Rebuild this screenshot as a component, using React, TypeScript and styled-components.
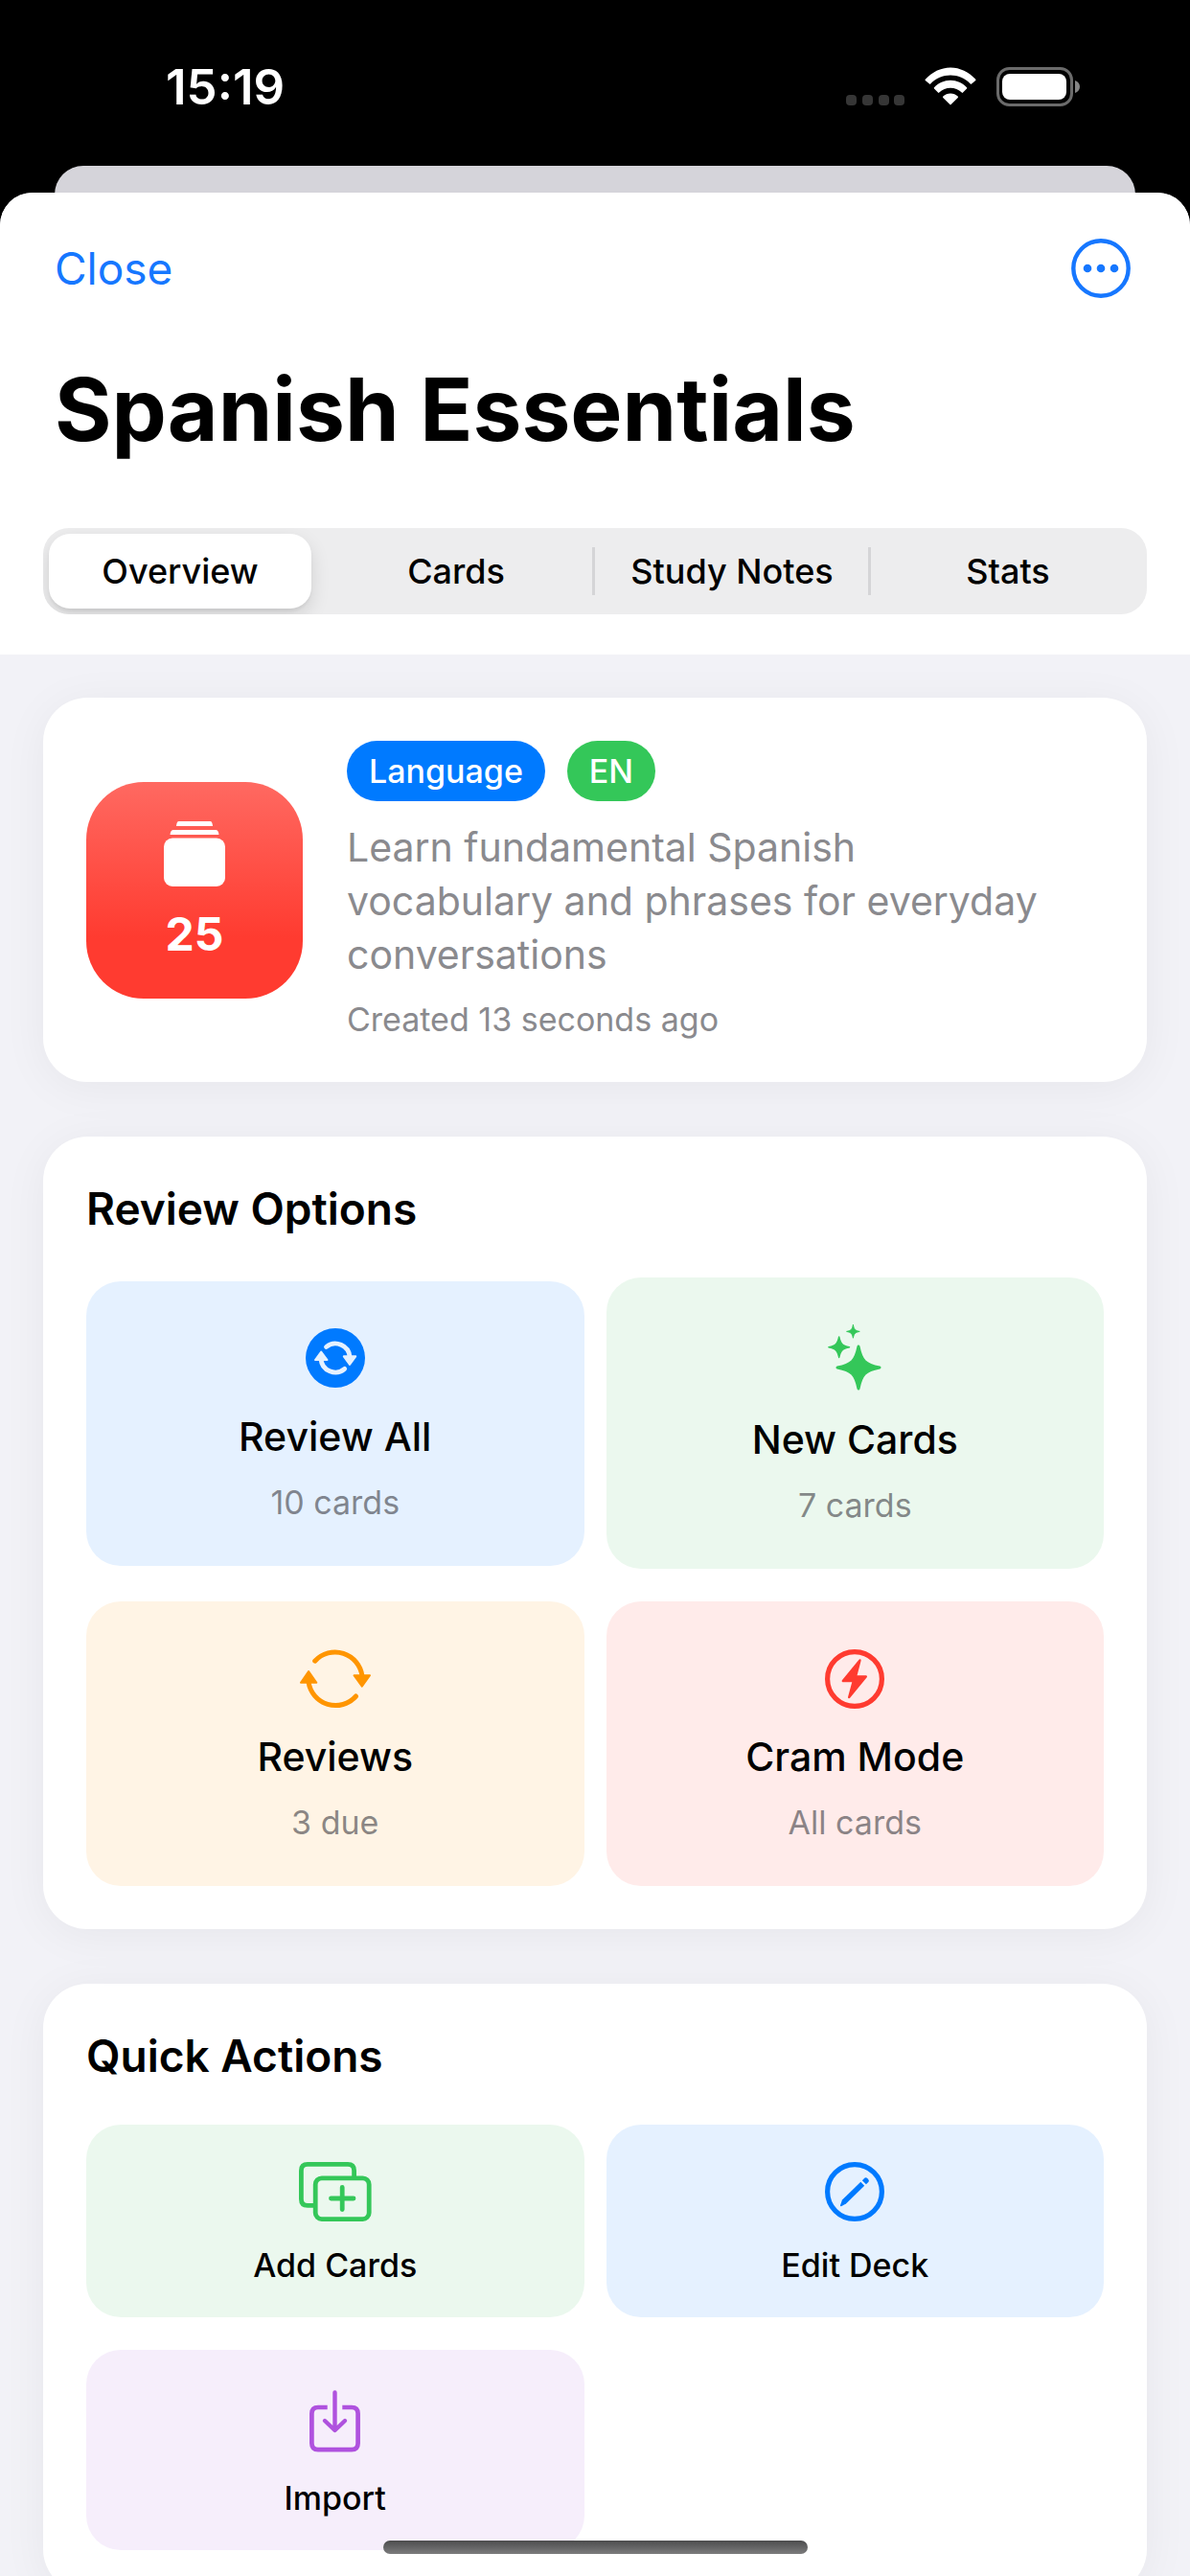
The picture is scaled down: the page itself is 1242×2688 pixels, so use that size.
import React, { useState } from "react";
import styled, { createGlobalStyle } from "styled-components";

const GlobalStyle = createGlobalStyle`
  * { box-sizing: border-box; }
  html, body { margin: 0; background: #000; }
  body {
    font-family: Inter, "Liberation Sans", sans-serif;
    color: #000;
    -webkit-font-smoothing: antialiased;
  }
  button { font: inherit; color: inherit; border: 0; background: none; padding: 0; margin: 0; cursor: pointer; }
  h1, h2, p { margin: 0; }
  svg { display: block; }
`;

const Screen = styled.div`
  position: relative;
  display: flex;
  flex-direction: column;
  height: 100vh;
  overflow: hidden;
  background: #000;
`;

const StatusBar = styled.header`
  flex: none;
  display: flex;
  align-items: center;
  justify-content: space-between;
  height: 173px;
  padding: 8px 114px 0 173px;
  color: #fff;
`;

const Clock = styled.time`
  font-size: 51px;
  line-height: 60px;
  font-weight: 600;
`;

const StatusIcons = styled.div`
  display: flex;
  align-items: center;
  gap: 21px;
`;

const BackSheet = styled.div`
  flex: none;
  height: 58px;
  margin: 0 57px -30px;
  border-radius: 30px 30px 0 0;
  background: #d5d4da;
`;

const Sheet = styled.main`
  position: relative;
  flex: 1;
  min-height: 0;
  display: flex;
  flex-direction: column;
  overflow: hidden;
  border-radius: 34px 34px 0 0;
  background: #f2f2f7;
`;

const SheetHeader = styled.div`
  flex: none;
  background: #fff;
  padding-bottom: 42px;
`;

const NavBar = styled.nav`
  display: flex;
  align-items: center;
  justify-content: space-between;
  height: 158px;
  padding: 0 62px 0 57px;
`;

const NavButton = styled.button`
  color: #1677ff;
  font-size: 46px;
  line-height: 60px;
`;

const Title = styled.h1`
  padding: 8px 57px 64px;
  font-size: 91px;
  line-height: 120px;
  font-weight: 700;
`;

const Tabs = styled.div`
  display: grid;
  grid-template-columns: repeat(4, 1fr);
  height: 90px;
  margin: 0 45px;
  border-radius: 27px;
  background: #ededee;
  overflow: hidden;
`;

const Tab = styled.button<{ $divided: boolean }>`
  display: flex;
  align-items: center;
  padding: 6px 0;
  background: ${(p) =>
    p.$divided ? "linear-gradient(#d5d5d7, #d5d5d7) right center / 3px 50px no-repeat" : "none"};
`;

const TabLabel = styled.span<{ $active: boolean }>`
  flex: 1;
  height: 78px;
  margin: 0 8px 0 6px;
  border-radius: 22px;
  font-size: 36px;
  line-height: 78px;
  font-weight: 500;
  white-space: nowrap;
  background: ${(p) => (p.$active ? "#fff" : "transparent")};
  box-shadow: ${(p) => (p.$active ? "0 8px 20px rgba(0, 0, 0, 0.12), 0 3px 3px rgba(0, 0, 0, 0.05)" : "none")};
`;

const Content = styled.div`
  flex: 1;
  min-height: 0;
  overflow: hidden;
  display: flex;
  flex-direction: column;
  gap: 57px;
  padding: 45px 45px 0;
`;

const Card = styled.section`
  flex: none;
  padding: 45px;
  border-radius: 46px;
  background: #fff;
  box-shadow: 0 6px 48px rgba(0, 0, 0, 0.05);
`;

const DeckCard = styled(Card)`
  display: flex;
  align-items: center;
  gap: 46px;
`;

const DeckBadge = styled.div`
  flex: none;
  display: flex;
  flex-direction: column;
  align-items: center;
  justify-content: center;
  gap: 20px;
  width: 226px;
  height: 226px;
  padding-top: 5px;
  border-radius: 60px;
  color: #fff;
  background: linear-gradient(#ff6961, #ff3b30 72%);
`;

const DeckCount = styled.span`
  font-size: 48px;
  line-height: 60px;
  font-weight: 700;
`;

const DeckInfo = styled.div`
  flex: 1;
  display: flex;
  flex-direction: column;
  gap: 20px;
`;

const Pills = styled.div`
  display: flex;
  gap: 23px;
`;

const Pill = styled.span<{ $color: string }>`
  padding: 0 23px;
  border-radius: 32px;
  background: ${(p) => p.$color};
  color: #fff;
  font-size: 34px;
  line-height: 63px;
  font-weight: 500;
`;

const Description = styled.p`
  max-width: 740px;
  color: #8a8a8e;
  font-size: 41px;
  line-height: 56px;
`;

const Created = styled.p`
  color: #8a8a8e;
  font-size: 34px;
  line-height: 40px;
`;

const SectionTitle = styled.h2`
  margin-bottom: 42px;
  font-size: 46px;
  line-height: 60px;
  font-weight: 600;
`;

const TileGrid = styled.div`
  display: grid;
  grid-template-columns: repeat(2, 1fr);
  align-items: center;
  gap: 34px 23px;
`;

const Tile = styled.button<{ $bg: string; $compact?: boolean }>`
  display: flex;
  flex-direction: column;
  align-items: center;
  gap: 18px;
  padding: ${(p) => (p.$compact ? 33 : 45)}px 24px;
  border-radius: 36px;
  background: ${(p) => p.$bg};
`;

const TileIcon = styled.span<{ $height: number }>`
  display: flex;
  align-items: center;
  height: ${(p) => p.$height}px;
`;

const TileTitle = styled.span`
  font-size: 41px;
  line-height: 57px;
  font-weight: 500;
`;

const TileNote = styled.span`
  color: rgba(60, 60, 67, 0.6);
  font-size: 34px;
  line-height: 43px;
`;

const TileLabel = styled.span`
  font-size: 34px;
  line-height: 43px;
  font-weight: 500;
`;

const HomeIndicator = styled.div`
  position: absolute;
  bottom: 23px;
  left: 50%;
  width: 443px;
  height: 14px;
  margin-left: -221px;
  border-radius: 7px;
  background: linear-gradient(#4c4c4d, #7c7c7d);
`;

const round = { strokeLinecap: "round", strokeLinejoin: "round" } as const;

const SignalIcon = () => (
  <svg width="61" height="41" viewBox="0 0 61 41" fill="#363636" aria-hidden="true">
    {[0, 17, 34, 50].map((x) => (
      <rect key={x} x={x} y="29" width="11" height="11" rx="4" />
    ))}
  </svg>
);

const WifiIcon = () => (
  <svg width="54" height="41" viewBox="0 0 54 41" fill="#fff" aria-hidden="true">
    <path d="M0.8 12.8C7.5 5.4 17 0.5 27 0.5S46.5 5.4 53.2 12.8Q53.8 13.4 53.2 14L49 17.5Q48.4 18 47.8 17.4C42 11.6 35 8.6 27 8.6S12 11.6 6.2 17.4Q5.600 18 5 17.5L0.8 14Q0.2 13.4 0.8 12.8Z" />
    <path d="M10 21.2C14.5 16.6 20.5 13.8 27 13.8S39.5 16.6 44 21.2Q44.6 21.8 44 22.4L40 26.6Q39.4 27.2 38.8 26.6C35.5 23.5 31.5 21.8 27 21.8S18.5 23.5 15.2 26.6Q14.6 27.2 14 26.6L10 22.4Q9.4 21.8 10 21.2Z" />
    <path d="M19.3 30.5C21.5 28.5 24 27.4 27 27.4S32.5 28.5 34.7 30.5Q35.4 31.2 34.7 31.9L27.6 39Q27 39.6 26.4 39L19.3 31.9Q18.6 31.2 19.3 30.5Z" />
  </svg>
);

const BatteryIcon = () => (
  <svg width="88" height="41" viewBox="0 0 88 41" aria-hidden="true">
    <rect x="1.5" y="1.5" width="77" height="38" rx="12" fill="none" stroke="#6b6b6b" strokeWidth="3" />
    <rect x="6" y="7" width="67" height="27" rx="8" fill="#fff" />
    <path d="M82 14C85 15 87 17.5 87 20.5S85 26 82 27Z" fill="#858585" />
  </svg>
);

const MoreIcon = () => (
  <svg width="62" height="62" viewBox="0 0 62 62" fill="currentColor" aria-hidden="true">
    <circle cx="31" cy="31" r="28.7" fill="none" stroke="currentColor" strokeWidth="4.4" />
    <circle cx="17" cy="31" r="4.3" />
    <circle cx="31" cy="31" r="4.3" />
    <circle cx="45" cy="31" r="4.3" />
  </svg>
);

const StackIcon = () => (
  <svg width="64" height="68" viewBox="0 0 64 68" fill="#fff" aria-hidden="true">
    <path d="M15.5 0H48.5Q50.5 0 51 5H13Q13.5 0 15.5 0Z" />
    <path d="M10 9H54Q57 9 57.5 14H6.5Q7 9 10 9Z" />
    <rect y="17.5" width="64" height="50.5" rx="9" />
  </svg>
);

const CycleFilledIcon = () => (
  <svg width="62" height="62" viewBox="0 0 62 62" aria-hidden="true">
    <circle cx="31" cy="31" r="31" fill="#007aff" />
    <g fill="none" stroke="#e5f1ff" strokeWidth="4.8" {...round}>
      <path d="M21.500 19.5A15 15 0 0 1 46 30" />
      <path d="M40.700 42.400A15 15 0 0 1 16 32" />
    </g>
    <g fill="#e5f1ff" stroke="#e5f1ff" strokeWidth="2" {...round}>
      <path d="M39.8 29.3H52.2L46 38Z" />
      <path d="M10 33H22.5L16.2 24.5Z" />
    </g>
  </svg>
);

const CycleIcon = () => (
  <svg width="74" height="62" viewBox="0 0 74 62" aria-hidden="true">
    <g fill="none" stroke="#ff9500" strokeWidth="5" {...round}>
      <path d="M15.7 12.2A28.5 28.5 0 0 1 65 28" />
      <path d="M58.5 49A28.5 28.5 0 0 1 9 34" />
    </g>
    <g fill="#ff9500" stroke="#ff9500" strokeWidth="2" {...round}>
      <path d="M56.5 27.2H73L64.8 38.7Z" />
      <path d="M1 34.7H17.3L9.1 23Z" />
    </g>
  </svg>
);

const STAR = "M0 -22C3 -7 7 -3 22 0C7 3 3 7 0 22C-3 7 -7 3 -22 0C-7 -3 -3 -7 0 -22Z";

const SparklesIcon = () => (
  <svg width="56" height="70" viewBox="0 0 56 70" fill="#34c759" stroke="#34c759" strokeWidth="3" {...round} aria-hidden="true">
    <path d={STAR} transform="translate(32 45)" />
    <path d={STAR} transform="translate(11.7 23.7) scale(0.49)" />
    <path d={STAR} transform="translate(26.4 7.4) scale(0.31)" />
  </svg>
);

const BoltIcon = () => (
  <svg width="62" height="62" viewBox="0 0 62 62" aria-hidden="true">
    <circle cx="31" cy="31" r="28.4" fill="none" stroke="#ff3b30" strokeWidth="5.2" />
    <path d="M36.5 11.5L18.8 33H29.8L25.2 50L42.800 28.5H32Z" fill="#ff3b30" stroke="#ff3b30" strokeWidth="2.4" {...round} />
  </svg>
);

const AddCardsIcon = () => (
  <svg width="76" height="62" viewBox="0 0 76 62" fill="none" stroke="#34c759" strokeWidth="4.8" aria-hidden="true">
    <path d="M15 45.3H9Q2.4 45.3 2.4 38.7V9Q2.4 2.4 9 2.4H51Q57.6 2.4 57.6 9V15" />
    <rect x="17.2" y="16.8" width="56" height="42.8" rx="6.6" />
    <path d="M45.2 26.5V49.5M33.5 38H57" strokeLinecap="round" />
  </svg>
);

const EditIcon = () => (
  <svg width="62" height="62" viewBox="0 0 62 62" aria-hidden="true">
    <circle cx="31" cy="31" r="28.4" fill="none" stroke="#007aff" strokeWidth="5.2" />
    <path d="M16 45.2L18 39.6L37.3 20.8L41.2 24.7L22 43.6L17 46.2Q15.8 46.4 16 45.2Z" fill="#007aff" />
    <path d="M38.9 19.2L41.3 16.8Q42.8 15.6 44.4 17.2L45.3 18.2Q46.6 19.7 45.3 21L42.9 23.3Z" fill="#007aff" />
  </svg>
);

const ImportIcon = () => (
  <svg width="55" height="65" viewBox="0 0 55 65" fill="none" stroke="#af52de" strokeWidth="4.7" aria-hidden="true">
    <path d="M19.7 18H10Q3.4 18 3.4 24.6V55.6Q3.4 62.2 10 62.2H45Q51.6 62.2 51.6 55.6V24.6Q51.6 18 45 18H35.3" />
    <path d="M27.5 2.5V41M17 32L27.5 42L38 32" {...round} strokeWidth="4.4" />
  </svg>
);

const TABS = ["Overview", "Cards", "Study Notes", "Stats"];

const REVIEW_OPTIONS = [
  { title: "Review All", note: "10 cards", bg: "#e5f1ff", height: 71, Icon: CycleFilledIcon },
  { title: "New Cards", note: "7 cards", bg: "#ebf8ee", height: 78, Icon: SparklesIcon },
  { title: "Reviews", note: "3 due", bg: "#fff4e5", height: 71, Icon: CycleIcon },
  { title: "Cram Mode", note: "All cards", bg: "#ffebea", height: 71, Icon: BoltIcon },
];

const QUICK_ACTIONS = [
  { title: "Add Cards", bg: "#ebf8ee", height: 74, Icon: AddCardsIcon },
  { title: "Edit Deck", bg: "#e5f1ff", height: 74, Icon: EditIcon },
  { title: "Import", bg: "#f6eefb", height: 82, Icon: ImportIcon },
];

export default function App() {
  const [active, setActive] = useState("Overview");
  const activeIndex = TABS.indexOf(active);

  return (
    <Screen>
      <GlobalStyle />
      <StatusBar>
        <Clock>15:19</Clock>
        <StatusIcons>
          <SignalIcon />
          <WifiIcon />
          <BatteryIcon />
        </StatusIcons>
      </StatusBar>
      <BackSheet />
      <Sheet>
        <SheetHeader>
          <NavBar>
            <NavButton>Close</NavButton>
            <NavButton aria-label="More options">
              <MoreIcon />
            </NavButton>
          </NavBar>
          <Title>Spanish Essentials</Title>
          <Tabs role="tablist">
            {TABS.map((tab, i) => (
              <Tab
                key={tab}
                role="tab"
                aria-selected={tab === active}
                $divided={i < TABS.length - 1 && i !== activeIndex && i + 1 !== activeIndex}
                onClick={() => setActive(tab)}
              >
                <TabLabel $active={tab === active}>{tab}</TabLabel>
              </Tab>
            ))}
          </Tabs>
        </SheetHeader>
        <Content>
          <DeckCard>
            <DeckBadge>
              <StackIcon />
              <DeckCount>25</DeckCount>
            </DeckBadge>
            <DeckInfo>
              <Pills>
                <Pill $color="#007aff">Language</Pill>
                <Pill $color="#34c759">EN</Pill>
              </Pills>
              <Description>
                Learn fundamental Spanish
                <br />
                vocabulary and phrases for everyday conversations
              </Description>
              <Created>Created 13 seconds ago</Created>
            </DeckInfo>
          </DeckCard>
          <Card>
            <SectionTitle>Review Options</SectionTitle>
            <TileGrid>
              {REVIEW_OPTIONS.map(({ title, note, bg, height, Icon }) => (
                <Tile key={title} $bg={bg}>
                  <TileIcon $height={height}>
                    <Icon />
                  </TileIcon>
                  <TileTitle>{title}</TileTitle>
                  <TileNote>{note}</TileNote>
                </Tile>
              ))}
            </TileGrid>
          </Card>
          <Card>
            <SectionTitle>Quick Actions</SectionTitle>
            <TileGrid>
              {QUICK_ACTIONS.map(({ title, bg, height, Icon }) => (
                <Tile key={title} $bg={bg} $compact>
                  <TileIcon $height={height}>
                    <Icon />
                  </TileIcon>
                  <TileLabel>{title}</TileLabel>
                </Tile>
              ))}
            </TileGrid>
          </Card>
        </Content>
      </Sheet>
      <HomeIndicator />
    </Screen>
  );
}
